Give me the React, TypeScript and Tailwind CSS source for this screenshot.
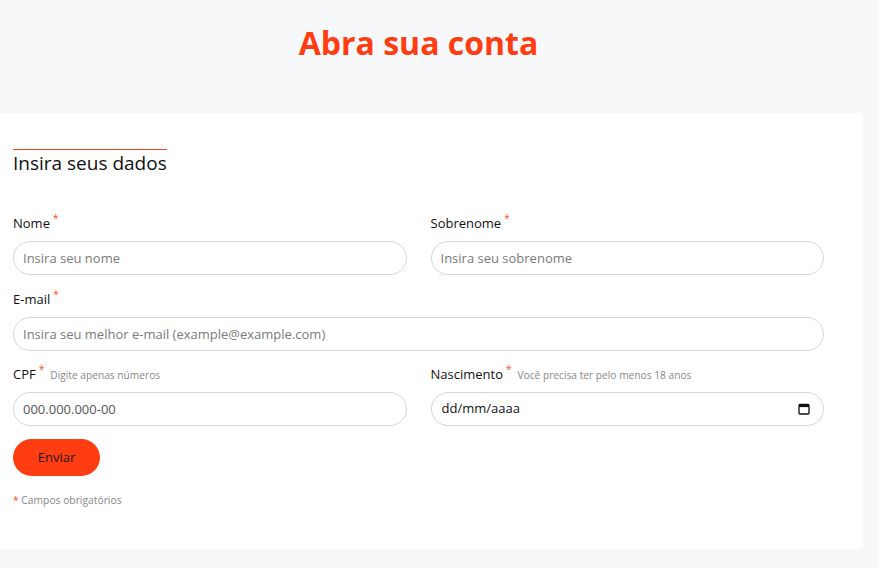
import React from "react";

const font = { fontFamily: '"Open Sans", "Noto Sans", sans-serif' };

function Label({ text, hint }: { text: string; hint?: string }) {
  return (
    <div className="flex items-start h-[18px] mb-[9px] text-[13px] leading-[18px] text-[#111]">
      <span>{text}</span>
      <span className="ml-[3px] text-[10px] leading-[10px] text-[#ff4a26] relative top-[-1px]">*</span>
      {hint && (
        <span className="ml-[6px] text-[10.2px] leading-[18px] text-[#888] relative top-[1px]">{hint}</span>
      )}
    </div>
  );
}

const inputCls =
  "w-full h-[34px] rounded-full border border-[#d4d6da] bg-white px-[9px] text-[13px] text-[#111] outline-none placeholder:text-[#7b7b7b]";

export default function App() {
  return (
    <div className="min-h-[568px] bg-[#f7f8fa]" style={font}>
      <div className="h-[113px] pt-[21px] pr-[42px] text-center">
        <h1 className="text-[32px] leading-[44px] font-bold text-[#ff3d12]">Abra sua conta</h1>
      </div>
      <div className="w-[863px] h-[436px] bg-white pt-[36px] pl-[13px]">
        <h2 className="inline-block border-t border-[#e8442a] text-[19px] leading-[27px] text-[#111] font-normal">
          Insira seus dados
        </h2>
        <form className="mt-[37px] w-[811px]">
          <div className="grid grid-cols-2 gap-x-[24px]">
            <div className="mb-[15px]">
              <Label text="Nome" />
              <input className={inputCls} placeholder="Insira seu nome" />
            </div>
            <div className="mb-[15px]">
              <Label text="Sobrenome" />
              <input className={inputCls} placeholder="Insira seu sobrenome" />
            </div>
          </div>
          <div className="mb-[14px]">
            <Label text="E-mail" />
            <input className={inputCls} placeholder="Insira seu melhor e-mail (example@example.com)" />
          </div>
          <div className="grid grid-cols-2 gap-x-[24px]">
            <div>
              <Label text="CPF" hint="Digite apenas números" />
              <input className={inputCls + " placeholder:text-[#555]"} placeholder="000.000.000-00" />
            </div>
            <div>
              <Label text="Nascimento" hint="Você precisa ter pelo menos 18 anos" />
              <div className="w-full h-[34px] rounded-full border border-[#d4d6da] bg-white pl-[10px] pr-[12px] flex items-center justify-between text-[13px] text-[#111]">
                <span>dd/mm/aaaa</span>
                <svg width="12" height="12" viewBox="0 0 12 12" className="mr-[1px]">
                  <rect x="1" y="1.5" width="10" height="9.5" rx="1" fill="none" stroke="#111" strokeWidth="1.3" />
                  <rect x="1" y="1.5" width="10" height="2.6" fill="#111" />
                </svg>
              </div>
            </div>
          </div>
          <button
            type="button"
            className="mt-[13px] w-[87px] h-[37px] rounded-full bg-[#ff3d12] text-[13px] text-[#1a1a1a]"
          >
            Enviar
          </button>
          <div className="mt-[17px] text-[10.3px] leading-[14px] text-[#888]">
            <span className="text-[#ff4a26]">*</span> Campos obrigatórios
          </div>
        </form>
      </div>
    </div>
  );
}
